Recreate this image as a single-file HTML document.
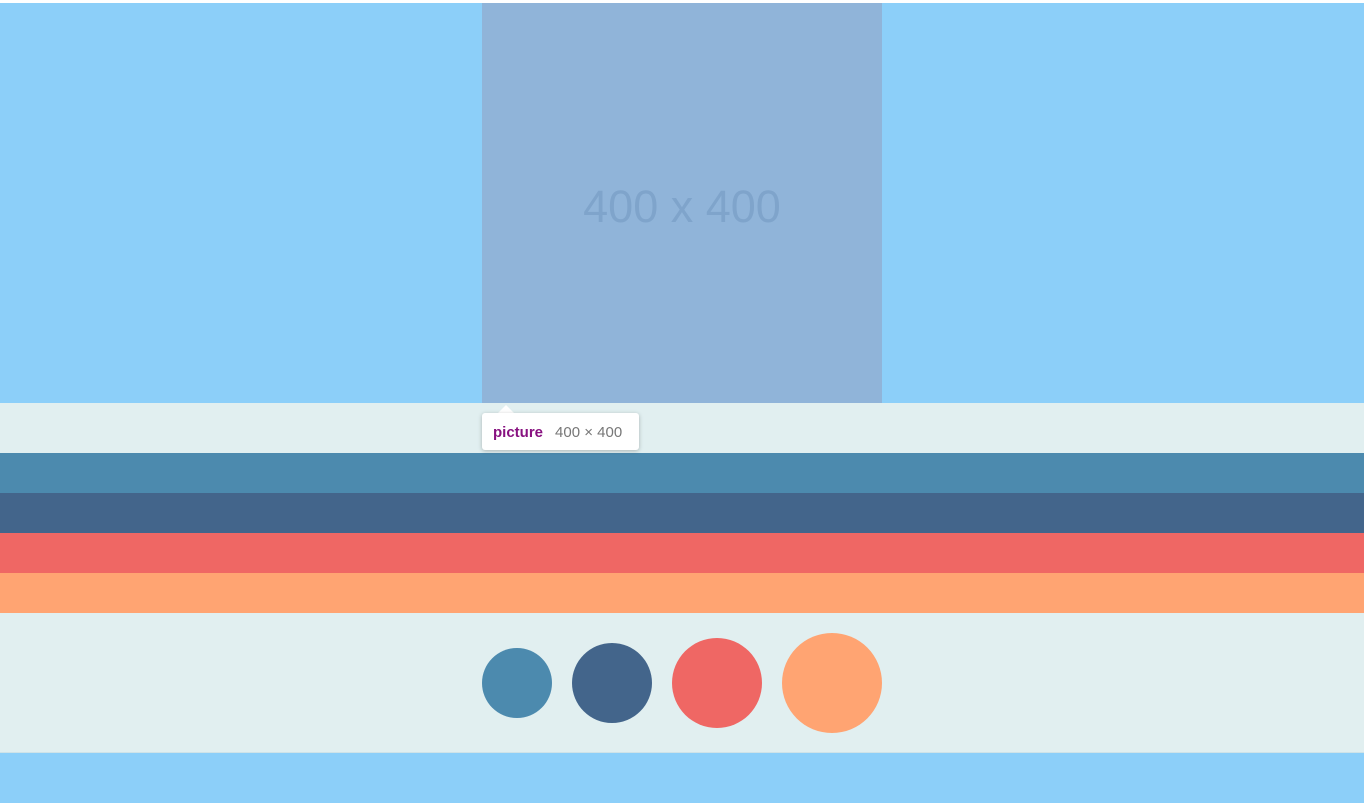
<!DOCTYPE html>
<html><head><style>
body{margin:0;width:1364px;height:803px;background:#fff;position:relative;overflow:hidden;font-family:"Liberation Sans",sans-serif}
div{position:absolute;box-sizing:border-box}
.c{border-radius:50%}
</style></head><body>
<div style="left:0;top:3px;width:1364px;height:400px;background:#8ccff9"></div>
<div style="left:482px;top:3px;width:400px;height:400px;background:#90b4d9;color:#7fa4cb;font-size:45px;line-height:408px;text-align:center">400 x 400</div>
<div style="left:0;top:403px;width:1364px;height:50px;background:#e1eff0"></div>
<div style="left:0;top:453px;width:1364px;height:40px;background:#4c8aae"></div>
<div style="left:0;top:493px;width:1364px;height:40px;background:#43658b"></div>
<div style="left:0;top:533px;width:1364px;height:40px;background:#ef6764"></div>
<div style="left:0;top:573px;width:1364px;height:40px;background:#ffa472"></div>
<div style="left:0;top:613px;width:1364px;height:140px;background:#e1eff0;border-bottom:1px solid #cfe3e8"></div>
<div style="left:0;top:753px;width:1364px;height:50px;background:#8ccff9"></div>
<div class="c" style="left:482px;top:648px;width:70px;height:70px;background:#4c8aae"></div>
<div class="c" style="left:572px;top:643px;width:80px;height:80px;background:#43658b"></div>
<div class="c" style="left:672px;top:638px;width:90px;height:90px;background:#ef6764"></div>
<div class="c" style="left:782px;top:633px;width:100px;height:100px;background:#ffa472"></div>
<div style="left:498px;top:405px;width:0;height:0;border-left:8px solid transparent;border-right:8px solid transparent;border-bottom:8px solid #fff"></div>
<div style="left:482px;top:413px;width:157px;height:37px;background:#fff;border-radius:3px;box-shadow:0 1px 4px rgba(0,0,0,.25);font-size:15px;line-height:39px;padding-left:11px;white-space:nowrap"><b style="color:#881280">picture</b><span style="color:#777;margin-left:12px">400 × 400</span></div>
</body></html>
